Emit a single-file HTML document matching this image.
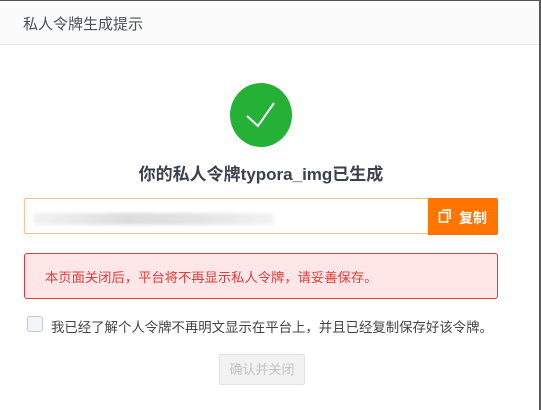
<!DOCTYPE html><html><head><meta charset="utf-8"><style>
body{margin:0;width:541px;height:410px;overflow:hidden;background:#fff;font-family:"Liberation Sans","Noto Sans CJK SC",sans-serif;position:relative}
.hdr{position:absolute;left:0;top:1px;width:539px;height:43px;background:#fbfbfc;border-bottom:1px solid #e4e6ea;}
.hdr span{position:absolute;left:23px;top:12px;font-size:15px;color:#4a4f58}
.top{position:absolute;left:0;top:0;width:541px;height:1px;background:#555}
.rt{position:absolute;right:0;top:0;width:2px;height:410px;background:#5a5a5a}
.circ{position:absolute;left:230px;top:83px;width:62px;height:64px;border-radius:50%;background:#25b135}
.title{position:absolute;left:0;width:522px;text-align:center;top:160px;font-size:17px;font-weight:bold;color:#3c4150}
.inp{position:absolute;left:24px;top:198px;width:473px;height:36px;border:1px solid #f8c08a;border-radius:2px;box-sizing:border-box}
.blur{position:absolute;left:34px;top:213px;width:240px;height:12px;background:linear-gradient(90deg,#f2f2f2,#ddd 40%,#e4e4e4 70%,#f4f4f4);filter:blur(1.5px)}
.btn{position:absolute;left:428px;top:198px;width:70px;height:37px;background:#ff7500;color:#fff;font-size:14px;font-weight:bold;border-radius:0 2px 2px 0}
.btn span{position:absolute;left:31px;top:10px}
.alert{position:absolute;left:24px;top:253px;width:474px;height:46px;box-sizing:border-box;border:1px solid #e8363e;border-radius:3px;background:#ffe7e7;color:#e03c3c;font-size:13.3px;padding:13px 0 0 20px}
.cb{position:absolute;left:27px;top:316px;width:14px;height:14px;border:1px solid #c4c8d0;border-radius:3px;background:#f4f5f8}
.cbt{position:absolute;left:51px;top:316px;font-size:13.4px;color:#444}
.ok{position:absolute;left:219px;top:354px;width:86px;height:31px;box-sizing:border-box;border:1px solid #e2e2e2;background:#f2f2f2;color:#c3c3c3;font-size:13px;text-align:center;line-height:29px;border-radius:2px}
</style></head><body>
<div class="hdr"><span>私人令牌生成提示</span></div><div class="top"></div><div class="rt"></div>
<div class="circ"><svg width="62" height="64" viewBox="0 0 62 64"><path d="M17 33 L28 43 L44 20" fill="none" stroke="#fff" stroke-width="2"/></svg></div>
<div class="title">你的私人令牌typora_img已生成</div>
<div class="inp"></div><div class="blur"></div>
<div class="btn"><svg style="position:absolute;left:10px;top:11px" width="14" height="14" viewBox="0 0 14 14"><rect x="1.5" y="3.5" width="8" height="9.5" fill="none" stroke="#fff" stroke-width="1.6"/><path d="M4 1 H12 V10" fill="none" stroke="#fff" stroke-width="1.6"/></svg><span>复制</span></div>
<div class="alert">本页面关闭后，平台将不再显示私人令牌，请妥善保存。</div>
<div class="cb"></div><div class="cbt">我已经了解个人令牌不再明文显示在平台上，并且已经复制保存好该令牌。</div>
<div class="ok">确认并关闭</div>
</body></html>
